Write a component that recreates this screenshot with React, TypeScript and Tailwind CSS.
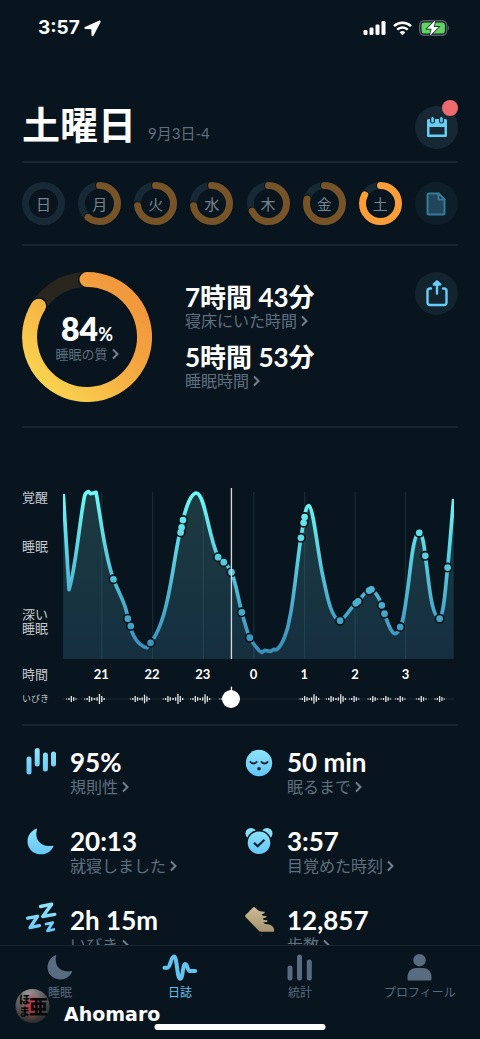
import { useState } from "react";
import type { ReactNode } from "react";

interface Day {
  label: string;
  score: number;
  active?: boolean;
}

interface Stat {
  value: string;
  label: string;
  icon: ReactNode;
}

const days: Day[] = [
  { label: "日", score: 0 },
  { label: "月", score: 61 },
  { label: "火", score: 73 },
  { label: "水", score: 73 },
  { label: "木", score: 68 },
  { label: "金", score: 79 },
  { label: "土", score: 83, active: true },
];

const hours = ["21", "22", "23", "0", "1", "2", "3"];

const gridX = [305, 457, 609, 760, 912, 1063, 1214];

const sleepCurve =
  "M190 72 L207 358 C228 290 240 140 254 76 Q258 66 266 65 L271 71 L288 67 C300 130 312 250 340 327 C352 360 370 388 378 420 C390 470 398 520 440 532 C470 500 488 450 500 395 C520 310 528 215 548 150 C560 100 575 69 588 69 C614 72 622 190 653 261 C665 276 682 280 693 306 C706 335 712 380 724 426 C734 460 738 480 748 502 C758 522 768 530 776 541 L784 546 L792 540 L810 543 L820 537 L828 538 C846 525 862 480 868 440 C880 385 890 270 901 203 C910 150 914 107 925 107 C938 112 952 250 965 310 C978 370 990 445 1018 451 C1030 450 1050 410 1068 397 C1080 388 1092 360 1108 360 C1124 360 1136 385 1143 405 C1152 430 1166 485 1182 490 C1206 490 1212 410 1220 360 C1230 290 1236 190 1255 188 C1266 192 1270 230 1273 257 C1284 330 1290 440 1316 445 C1330 430 1334 340 1340 292 C1348 210 1352 150 1358 87";

const dots = [
  [340, 327], [383, 445], [392, 467], [451, 517], [548, 150], [544, 172], [541, 187],
  [653, 261], [670, 276], [693, 306], [724, 426], [748, 502], [901, 203], [909, 158],
  [912, 141], [1018, 451], [1065, 399], [1072, 393], [1105, 361], [1112, 357],
  [1143, 405], [1151, 430], [1198, 470], [1255, 188], [1273, 257], [1316, 445], [1340, 292],
];

// x position and peak height of each snore burst
const snores = [
  [214, 18], [268, 18], [298, 30], [405, 18], [433, 26], [503, 18], [533, 30], [585, 18],
  [614, 28], [672, 18], [912, 18], [940, 28], [991, 18], [1020, 28], [1060, 18],
  [1116, 18], [1155, 18], [1198, 18], [1261, 18], [1316, 18],
];

const waves = [
  [0, 1], [-7, 0.35], [7, 0.6], [-14, 0.15], [14, 0.2],
];

function Chevron() {
  return (
    <svg width="7" height="12" viewBox="0 0 7 12" fill="none" stroke="currentColor" strokeWidth="2" className="shrink-0 text-[#71808e]" aria-hidden="true">
      <path d="M1 1.5 5.5 6 1 10.5" />
    </svg>
  );
}

function StatusBar() {
  return (
    <div className="flex h-14 items-center justify-between pl-[38px] pr-[30px] text-white">
      <div className="flex items-center gap-1">
        <span className="font-['Inter',sans-serif] text-[19px] font-bold leading-6">3:57</span>
        <svg width="17" height="17" viewBox="0 0 16 16" fill="currentColor" aria-hidden="true">
          <path d="M14 .6.9 6.600c-1 .5-.8 1.700.3 1.800l5.700.2.200 5.700c0 1.200 1.500 1.400 2 .3L15.500 2.200C16 1 15.100.1 14 .6Z" />
        </svg>
      </div>
      <div className="flex items-center gap-[7px]">
        <svg width="23" height="16" viewBox="0 0 23 16" fill="currentColor" aria-hidden="true">
          <rect x="0.5" y="10" width="4" height="5" rx="1.3" />
          <rect x="6.5" y="7.5" width="4" height="7.5" rx="1.3" />
          <rect x="12.5" y="4.5" width="4" height="10.5" rx="1.3" />
          <rect x="18.5" y="1" width="4" height="14" rx="1.3" />
        </svg>
        <svg width="19" height="15" viewBox="0 0 19 15" fill="none" stroke="currentColor" strokeWidth="2.5" aria-hidden="true">
          <path d="M1 5.2a12.3 12.3 0 0 1 17 0M4.2 8.7a7.6 7.6 0 0 1 10.6 0" />
          <path d="M9.5 14.3 6.7 11.3a4 4 0 0 1 5.6 0Z" fill="currentColor" stroke="none" />
        </svg>
        <svg width="31" height="18" viewBox="0 0 31 18" aria-hidden="true">
          <rect x="0.7" y="1.7" width="27" height="14.6" rx="4.5" fill="none" stroke="#56616b" strokeWidth="1.4" />
          <rect x="2.5" y="3.5" width="23.4" height="11" rx="2.8" fill="#62d263" />
          <path d="M29.2 6.5c1.3.7 1.3 4.3 0 5Z" fill="#56616b" />
          <path d="M16.5.8 8 9.7h4.6L10.8 17l8.900-9h-4.900Z" fill="#fff" stroke="#09151e" strokeWidth="1.4" paintOrder="stroke" />
        </svg>
      </div>
    </div>
  );
}

function DayRing({ day }: { day: Day }) {
  const arc = day.score;
  return (
    <button type="button" aria-pressed={!!day.active} className="relative grid size-[43px] place-items-center">
      <svg viewBox="0 0 43 43" className="absolute inset-0 size-full -rotate-90" fill="none" aria-hidden="true">
        <circle cx="21.5" cy="21.5" r="18" stroke="#182936" strokeWidth="7" />
        {arc > 0 && (
          <>
            <circle cx="21.5" cy="21.5" r="18" pathLength="100" stroke="#09151e" strokeWidth="9" strokeLinecap="round" strokeDasharray={`${arc} 100`} />
            <circle cx="21.5" cy="21.5" r="18" pathLength="100" stroke={day.active ? "#fb9d38" : "#775427"} strokeWidth="7" strokeLinecap="round" strokeDasharray={`${arc} 100`} />
          </>
        )}
      </svg>
      <span className="relative text-[15px] leading-5 text-[#75858f]">{day.label}</span>
    </button>
  );
}

function QualityRing() {
  return (
    <div className="relative grid size-[130px] shrink-0 place-items-center">
      <svg viewBox="0 0 130 130" className="absolute inset-0 size-full" fill="none" aria-hidden="true">
        <defs>
          <linearGradient id="quality" x1="110" y1="10" x2="15" y2="105" gradientUnits="userSpaceOnUse">
            <stop offset="0" stopColor="#f1953d" />
            <stop offset="0.4" stopColor="#f4a53f" />
            <stop offset="1" stopColor="#fad350" />
          </linearGradient>
        </defs>
        <circle cx="65" cy="65" r="57.5" stroke="#292620" strokeWidth="15" />
        <path d="M65 7.5A57.5 57.5 0 1 1 16.5 34.2" stroke="#09151e" strokeWidth="18" strokeLinecap="round" />
        <path d="M65 7.5A57.5 57.5 0 1 1 16.5 34.2" stroke="url(#quality)" strokeWidth="15" strokeLinecap="round" />
      </svg>
      <a href="#quality" className="relative flex flex-col items-center pt-1">
        <span className="text-[32px] font-extrabold leading-6 text-white">
          84<span className="text-lg font-bold leading-6">%</span>
        </span>
        <span className="flex items-center gap-1 text-[13px] leading-4 text-[#5f707e]">
          睡眠の質
          <Chevron />
        </span>
      </a>
    </div>
  );
}

function Duration({ value, label }: { value: string; label: string }) {
  return (
    <a href="#duration" className="block">
      <span className="block text-[26px] font-bold leading-7 text-white">{value}</span>
      <span className="flex items-center gap-1 text-base leading-5 text-[#5f707e]">
        {label}
        <Chevron />
      </span>
    </a>
  );
}

function SleepChart() {
  const [position, setPosition] = useState(159);
  const playhead = 189 + (position + 9) * 3;

  return (
    <section className="flex border-b-2 border-[#162530] pb-[15px] pt-[60px]">
      <div className="flex w-[41px] shrink-0 flex-col text-[13px] leading-[14px] text-[#c3c9cd]">
        <span className="mt-[2px]">覚醒</span>
        <span className="mt-[35px]">睡眠</span>
        <span className="mt-[54px]">
          深い
          <br />
          睡眠
        </span>
        <span className="mt-auto leading-[30px]">時間</span>
        <label htmlFor="playhead" className="text-[9px] leading-5">
          いびき
        </label>
      </div>
      <div className="mr-1 min-w-0 flex-1">
        <svg viewBox="189 54 1170 513" className="block w-full" fill="none" role="img" aria-label="睡眠">
          <defs>
            <linearGradient id="line" x1="0" y1="60" x2="0" y2="545" gradientUnits="userSpaceOnUse">
              <stop offset="0" stopColor="#6ffbf6" />
              <stop offset="0.4" stopColor="#5acfe0" />
              <stop offset="1" stopColor="#3a8dba" />
            </linearGradient>
            <linearGradient id="area" x1="0" y1="60" x2="0" y2="567" gradientUnits="userSpaceOnUse">
              <stop offset="0" stopColor="#1d3b42" />
              <stop offset="1" stopColor="#152f3f" />
            </linearGradient>
          </defs>
          <path d={`${sleepCurve} V567 H189Z`} fill="url(#area)" />
          {gridX.map((x) => (
            <path key={x} d={`M${x} 66V567`} stroke="#4b7a88" strokeOpacity="0.22" strokeWidth="4" />
          ))}
          <path d={sleepCurve} stroke="url(#line)" strokeWidth="11" strokeLinejoin="round" />
          {dots.map(([x, y]) => (
            <circle key={`halo-${x}`} cx={x} cy={y} r="15" fill="#09151e" />
          ))}
          {dots.map(([x, y]) => (
            <circle key={x} cx={x} cy={y} r="10" fill="url(#line)" />
          ))}
          <path d={`M${playhead} 54V567`} stroke="#d5d9de" strokeWidth="4" />
        </svg>
        <div className="grid grid-cols-7 pl-[13px] pr-[23px] text-center text-[13px] font-bold leading-[30px] text-white">
          {hours.map((h) => (
            <span key={h}>{h}</span>
          ))}
        </div>
        <div className="relative h-5">
          <svg viewBox="189 657 1170 60" preserveAspectRatio="none" className="h-5 w-full overflow-visible" aria-hidden="true">
            <path d="M189 687H1359" stroke="#1c2a34" strokeWidth="3" />
            {snores.map(([x, h]) =>
              waves.map(([dx, k]) => {
                const size = Math.max(3, h * k);
                return <rect key={`${x}${dx}`} x={x + dx - 2} y={687 - size / 2} width="4" height={size} fill="#dfe2e4" />;
              })
            )}
            <path d={`M${playhead} 650V665`} stroke="#fff" strokeWidth="4" />
          </svg>
          <input
            id="playhead"
            type="range"
            min={0}
            max={372}
            value={position}
            onChange={(e) => setPosition(Number(e.target.value))}
            className="absolute inset-0 h-5 w-full appearance-none bg-transparent [&::-moz-range-thumb]:size-[18px] [&::-moz-range-thumb]:border-0 [&::-webkit-slider-thumb]:size-[18px] [&::-webkit-slider-thumb]:appearance-none [&::-webkit-slider-thumb]:rounded-full [&::-webkit-slider-thumb]:bg-white"
          />
        </div>
      </div>
    </section>
  );
}

function StatIcon({ children }: { children: ReactNode }) {
  return (
    <svg width="34" height="32" viewBox="0 0 34 32" fill="none" className="shrink-0 overflow-visible" aria-hidden="true">
      <defs>
        <linearGradient id="sky" x1="0" y1="2" x2="0" y2="30" gradientUnits="userSpaceOnUse">
          <stop offset="0" stopColor="#8de2f7" />
          <stop offset="1" stopColor="#62c4fa" />
        </linearGradient>
        <linearGradient id="sand" x1="0" y1="2" x2="0" y2="30" gradientUnits="userSpaceOnUse">
          <stop offset="0" stopColor="#cbb991" />
          <stop offset="1" stopColor="#9d8d68" />
        </linearGradient>
      </defs>
      {children}
    </svg>
  );
}

const stats: Stat[] = [
  {
    value: "95%",
    label: "規則性",
    icon: (
      <g fill="url(#sky)">
        <rect x="2.5" y="8.5" width="5" height="18" rx="2.5" />
        <rect x="10.7" y="0" width="5" height="18.5" rx="2.5" />
        <rect x="18.9" y="4.5" width="5" height="19" rx="2.5" />
        <rect x="27" y="3.5" width="5" height="15" rx="2.5" />
      </g>
    ),
  },
  {
    value: "50 min",
    label: "眠るまで",
    icon: (
      <>
        <circle cx="18" cy="15" r="13.2" fill="url(#sky)" />
        <path d="M9.5 14c1.6 2 4.400 2 6 0M20.500 14c1.600 2 4.400 2 6 0" stroke="#13232e" strokeWidth="2" strokeLinecap="round" />
        <circle cx="18" cy="20.800" r="1.8" fill="#13232e" />
      </>
    ),
  },
  {
    value: "20:13",
    label: "就寝しました",
    icon: (
      <path d="M12 1.700c.5-.3 1.100 0 .9.700C10 13 17.500 20.800 28.500 18.700c.8-.1 1.200.4.9 1-3 5.700-8.500 8.300-14.300 7.500C8 26.300 3.200 20.500 3.500 13.700 3.700 8.500 7 4.200 12 1.700Z" fill="url(#sky)" />
    ),
  },
  {
    value: "3:57",
    label: "目覚めた時刻",
    icon: (
      <>
        <g fill="url(#sky)">
          <circle cx="10" cy="6.5" r="5.5" />
          <circle cx="26" cy="6.5" r="5.5" />
        </g>
        <circle cx="18" cy="15.800" r="12.8" fill="#09151e" />
        <circle cx="18" cy="15.800" r="11.300" fill="url(#sky)" />
        <path d="m13 15.800 3.700 3.500 6.800-6.500" stroke="#13232e" strokeWidth="2.2" />
      </>
    ),
  },
  {
    value: "2h 15m",
    label: "いびき",
    icon: (
      <g stroke="url(#sky)" strokeWidth="3.4" strokeLinecap="round" strokeLinejoin="round">
        <path d="m16.500.5 11.200-2.300-9 12.300 12.100-2.100" />
        <path d="m3.700 12.200 9.800-1.900-7.500 11.300 9.400-2" />
        <path d="m22 18 6.700-1.400-5.200 8.200 6.300-1.300" strokeWidth="2.8" />
      </g>
    ),
  },
  {
    value: "12,857",
    label: "歩数",
    icon: (
      <path d="M4.500 11c-.6-.6-.6-1.300 0-1.900L12 1.400c.7-.7 1.300-.7 2 0L18 5l5 .7c1 .2 1 1.500 0 1.800l-2.500.8 1.300 1.400 3 .2c1 .1 1 1.500 0 1.700l-3.300.8 1.500 1.500 2.800.3c1 .2 1 1.500 0 1.700l-3.500.6 1.500 1.400c5.500-.3 9.400 2.600 9.400 6.300 0 1.100-.4 1.500-1.400 1.500H20c-1 0-1.500-.2-2.200-.9Z" fill="url(#sand)" />
    ),
  },
];

function SleepStats() {
  return (
    <section className="grid grid-cols-2 gap-y-[31px] pl-[2px] pt-[22px]">
      {stats.map((s) => (
        <a key={s.label} href="#stat" className="flex items-start gap-3">
          <StatIcon>{s.icon}</StatIcon>
          <span>
            <span className="block text-[26px] font-bold leading-7 text-white">{s.value}</span>
            <span className="flex items-center gap-1 text-base leading-[22px] text-[#5f707e] -mb-[2px]">
              {s.label}
              <Chevron />
            </span>
          </span>
        </a>
      ))}
    </section>
  );
}

const tabs = [
  {
    label: "睡眠",
    icon: (
      <path d="M10.300 2.200c.5-.3 1 0 .9.600-2.600 10 4.600 17.300 15 15.300.7-.1 1.100.3.8.9-2.700 5.500-8 8.200-13.700 7.300C6.700 25.300 2.300 20 2.500 13.700 2.700 8.700 5.700 4.500 10.300 2.200Z" fill="currentColor" />
    ),
  },
  {
    label: "日誌",
    active: true,
    icon: (
      <path d="M-.5 14.700h2.800C5.500 14.700 5.800 3.500 9 3.500c3.300 0 2.800 22.300 6.200 22.300 2.900 0 2.300-14.800 5.100-14.800 2.200 0 1.900 7 4.700 7h5.200" fill="none" stroke="currentColor" strokeWidth="4" strokeLinecap="round" />
    ),
  },
  {
    label: "統計",
    icon: (
      <g fill="currentColor">
        <rect x="2.5" y="12.5" width="5" height="15" rx="2.5" />
        <rect x="12" y="1.5" width="5" height="26" rx="2.5" />
        <rect x="21.8" y="6.5" width="5" height="21" rx="2.5" />
      </g>
    ),
  },
  {
    label: "プロフィール",
    icon: (
      <g fill="currentColor">
        <circle cx="14.5" cy="7.2" r="6.2" />
        <path d="M2.5 24c0-5.500 3.500-9 8.500-9h7c5 0 8.500 3.500 8.500 9v2c0 1-.5 1.500-1.500 1.500H4c-1 0-1.500-.5-1.500-1.500Z" />
      </g>
    ),
  },
];

function TabBar() {
  return (
    <nav className="relative h-[94px] shrink-0 border-t border-[#182732] bg-[#09151e]">
      <div className="grid grid-cols-4 pt-[7px]">
        {tabs.map((t) => (
          <a
            key={t.label}
            href="#tab"
            className={`flex flex-col items-center gap-0.5 text-xs leading-4 ${t.active ? "text-[#62c4ee]" : "text-[#586b7f]"}`}
          >
            <svg width="30" height="30" viewBox="0 0 30 30" className="overflow-visible" aria-hidden="true">
              {t.icon}
            </svg>
            {t.label}
          </a>
        ))}
      </div>
      <div className="absolute bottom-[15px] left-[15px] flex items-center gap-3.5">
        <svg width="35" height="36" viewBox="0 0 35 36" aria-hidden="true">
          <defs>
            <radialGradient id="badge" cx="0.4" cy="0.15" r="0.9">
              <stop offset="0" stopColor="#9a9a9a" />
              <stop offset="0.5" stopColor="#5c5a5a" />
              <stop offset="1" stopColor="#262626" />
            </radialGradient>
            <radialGradient id="glow">
              <stop offset="0" stopColor="#e02638" />
              <stop offset="1" stopColor="#e02638" stopOpacity="0" />
            </radialGradient>
          </defs>
          <circle cx="17.5" cy="18" r="17" fill="url(#badge)" />
          <ellipse cx="17" cy="18" rx="9" ry="14" fill="url(#glow)" />
          <g fill="#080808" className="font-['Noto_Sans_CJK_JP',sans-serif] font-black">
            <text x="4" y="16" fontSize="11">ほ</text>
            <text x="4" y="28" fontSize="11">ま</text>
            <text x="14" y="26" fontSize="19">亜</text>
          </g>
        </svg>
        <span className="pt-4 font-['DejaVu_Sans',sans-serif] text-[19px] font-bold leading-5 text-white">Ahomaro</span>
      </div>
      <div className="absolute bottom-[9px] left-1/2 h-1.5 w-[171px] -translate-x-1/2 rounded-full bg-white" />
    </nav>
  );
}

export default function App() {
  return (
    <div className="flex h-screen flex-col bg-[#09151e] font-['Lato','Noto_Sans_CJK_JP',sans-serif]">
      <StatusBar />
      <main className="min-h-0 flex-1 overflow-y-auto px-[22px] pt-[50px] [scrollbar-width:none]">
        <header className="flex items-start justify-between border-b-2 border-[#162530] pb-3">
          <div className="flex items-baseline gap-3">
            <h1 className="text-[38px] font-bold leading-[36px] text-white">土曜日</h1>
            <p className="text-[15px] leading-5 text-[#5f707e]">9月3日-4</p>
          </div>
          <button type="button" aria-label="カレンダー" className="relative grid size-[43px] place-items-center rounded-full bg-[#172834]">
            <svg width="22" height="22" viewBox="0 0 22 22" fill="#66cdf5" aria-hidden="true">
              <path fillRule="evenodd" d="M2.500 2h17A1.500 1.500 0 0 1 21 3.500v15a1.500 1.500 0 0 1-1.500 1.500h-17A1.500 1.500 0 0 1 1 18.500v-15A1.500 1.500 0 0 1 2.500 2ZM3.500 10v7.500h15V10Z" />
              <rect x="4" y="-0.5" width="5" height="7" rx="2.5" fill="#172834" />
              <rect x="13" y="-0.5" width="5" height="7" rx="2.5" fill="#172834" />
              <rect x="5.300" y="0" width="2.5" height="5.5" rx="1.2" />
              <rect x="14.200" y="0" width="2.5" height="5.5" rx="1.2" />
            </svg>
            <span className="absolute -top-1.5 right-0 size-4 rounded-full bg-[#ee6a6e]" />
          </button>
        </header>

        <div className="flex justify-between border-b-2 border-[#162530] py-[19px]">
          {days.map((d) => (
            <DayRing key={d.label} day={d} />
          ))}
          <button type="button" aria-label="メモ" className="grid size-[43px] place-items-center rounded-full bg-[#0f1f2a]">
            <svg width="20" height="24" viewBox="0 0 20 24" fill="#1f465a" stroke="#397a98" strokeWidth="2" strokeLinejoin="round" aria-hidden="true">
              <path d="M3 1.500h9.500L18.500 7.500V21a1.500 1.500 0 0 1-1.500 1.500H3A1.500 1.500 0 0 1 1.500 21V3A1.500 1.500 0 0 1 3 1.500Z" />
              <path d="M12.500 1.500v6h6Z" fill="#0f1f2a" />
            </svg>
          </button>
        </div>

        <section className="flex border-b-2 border-[#162530] pb-6 pt-[26px]">
          <QualityRing />
          <div className="ml-[33px] flex flex-1 flex-col gap-3 pt-[11px]">
            <Duration value="7時間 43分" label="寝床にいた時間" />
            <Duration value="5時間 53分" label="睡眠時間" />
          </div>
          <button type="button" aria-label="共有" className="grid size-[43px] shrink-0 place-items-center rounded-full bg-[#13242f]">
            <svg width="22" height="27" viewBox="0 0 22 27" fill="none" stroke="#66cdf5" strokeWidth="2.4" strokeLinecap="round" strokeLinejoin="round" aria-hidden="true">
              <path d="M5 8.500H4A2.500 2.500 0 0 0 1.500 11v11.500A2.500 2.500 0 0 0 4 25h14a2.500 2.500 0 0 0 2.500-2.500V11A2.500 2.500 0 0 0 18 8.500h-1M11 13.500V3" />
              <path d="m7.800 4.500 3.200-3 3.200 3Z" fill="#66cdf5" />
            </svg>
          </button>
        </section>

        <SleepChart />
        <SleepStats />
      </main>
      <TabBar />
    </div>
  );
}
